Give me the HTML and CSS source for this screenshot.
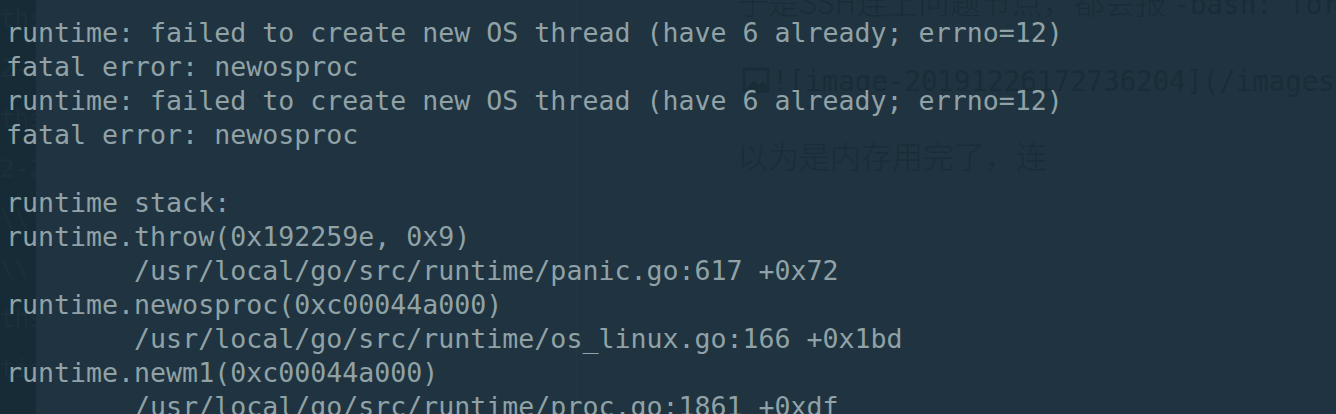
FILE: index.html
```html
<!DOCTYPE html>
<html lang="en">
  <head>
    <meta charset="UTF-8" />
    <meta name="viewport" content="width=device-width, initial-scale=1.0" />
    <title>newosproc</title>
    <link rel="stylesheet" href="styles.css">
  </head>

  <body>
    <div id="screen">
      <div id="gutter">
        <p class="gutter-line">ths</p>
        <p class="gutter-line">2-2</p>
        <p class="gutter-line">ths</p>
        <p class="gutter-line">2-2</p>
        <p class="gutter-line">\\</p>
        <p class="gutter-line">\\</p>
        <p class="gutter-line">ths</p>
        <p class="gutter-line">tia</p>
      </div>
      <div id="doc">
        <p class="doc-line">于是SSH连上问题节点，都会报 <code class="doc-code">-bash: fork: retry</code></p>
        <p class="doc-line doc-img"><span class="broken-img"><svg width="28" height="26" viewBox="0 0 28 26"><path d="M2 2h24v22H2z" fill="none" stroke="currentColor" stroke-width="3"/><path d="M4 22l8-9 5 5 4-4 5 8z" fill="currentColor"/></svg></span><code class="doc-code">![image-20191226172736204](/images/</code></p>
        <p class="doc-line">以为是内存用完了，连</p>
      </div>
      <div class="divider"></div>
      <pre id="console">runtime: failed to create new OS thread (have 6 already; errno=12)
fatal error: newosproc
runtime: failed to create new OS thread (have 6 already; errno=12)
fatal error: newosproc

runtime stack:
runtime.throw(0x192259e, 0x9)
	/usr/local/go/src/runtime/panic.go:617 +0x72
runtime.newosproc(0xc00044a000)
	/usr/local/go/src/runtime/os_linux.go:166 +0x1bd
runtime.newm1(0xc00044a000)
	/usr/local/go/src/runtime/proc.go:1861 +0xdf</pre>
    </div>
  </body>
</html>
```

FILE: styles.css
```css
html,
body {
  margin: 0;
  background-color: #1f3440;
}

#screen {
  position: relative;
  display: flex;
  width: 1336px;
  height: 414px;
  overflow: hidden;
  background-color: #1f3440;
}

#gutter {
  width: 36px;
  flex-shrink: 0;
  background-color: #172b36;
  padding-top: 4px;
  box-sizing: border-box;
  overflow: hidden;
}

.gutter-line {
  margin: 0 0 20px 0;
  font-family: "DejaVu Sans Mono", monospace;
  font-size: 24px;
  line-height: 30px;
  color: #1b303b;
  white-space: nowrap;
}

#doc {
  flex: 1;
  display: flex;
  flex-direction: column;
  gap: 40px;
  padding-left: 701px;
  margin-top: -17px;
}

.doc-line {
  margin: 0;
  font-family: "Noto Sans CJK SC", "Roboto", sans-serif;
  font-weight: 300;
  font-size: 31px;
  line-height: 36px;
  color: #192d38;
  white-space: nowrap;
}

.doc-code {
  font-family: "DejaVu Sans Mono", monospace;
  font-size: 27.5px;
}

.doc-img {
  padding-left: 5px;
  line-height: 32px;
}

.broken-img {
  display: inline-block;
  vertical-align: -2px;
  margin-right: 2px;
}

.divider {
  position: absolute;
  top: 0;
  bottom: 0;
  left: 576px;
  width: 1px;
  background-color: #213743;
}

#console {
  position: absolute;
  top: 16px;
  left: 6px;
  margin: 0;
  font-family: "DejaVu Sans Mono", monospace;
  font-size: 26.6px;
  line-height: 34px;
  tab-size: 8;
  color: #91a2a7;
}
```
